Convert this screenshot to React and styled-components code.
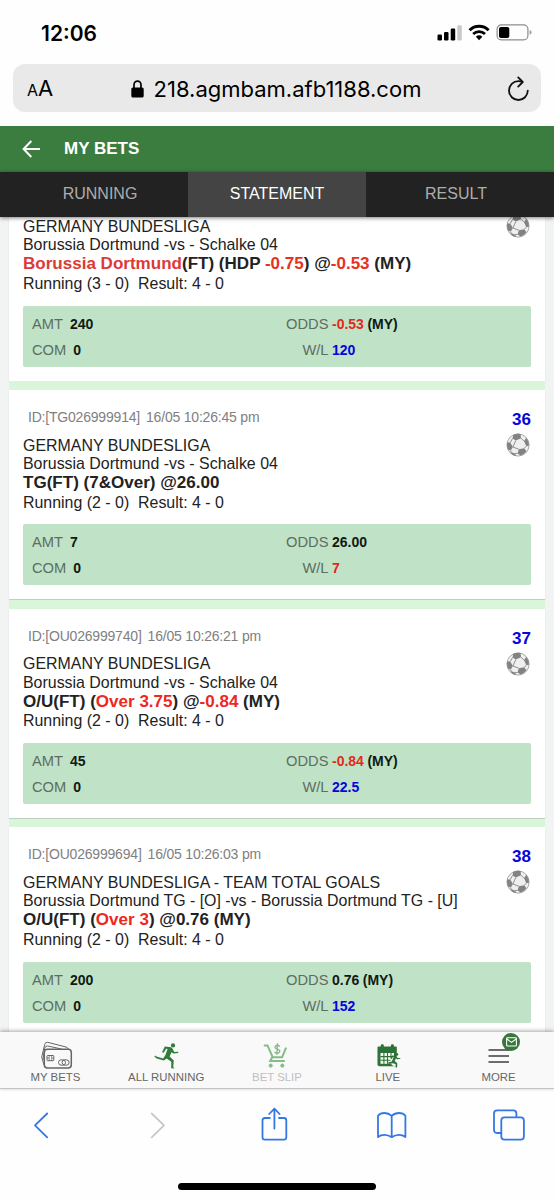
import React from 'react';
import styled, { createGlobalStyle } from 'styled-components';

const tabs = ['RUNNING', 'STATEMENT', 'RESULT'];

const bets = [
  {
    league: 'GERMANY BUNDESLIGA',
    match: 'Borussia Dortmund -vs - Schalke 04',
    pick: [['Borussia Dortmund', '#dc3a37'], ['(FT) (HDP '], ['-0.75', '#e8301e'], [') @'], ['-0.53', '#e8301e'], [' (MY)']],
    running: '3 - 0',
    amt: '240',
    odds: '-0.53',
    oddsType: '(MY)',
    wl: '120',
    win: true,
  },
  {
    no: 36,
    id: 'TG026999914',
    date: '16/05 10:26:45 pm',
    league: 'GERMANY BUNDESLIGA',
    match: 'Borussia Dortmund -vs - Schalke 04',
    pick: [['TG(FT) (7&Over) @26.00']],
    running: '2 - 0',
    amt: '7',
    odds: '26.00',
    wl: '7',
    win: false,
  },
  {
    no: 37,
    id: 'OU026999740',
    date: '16/05 10:26:21 pm',
    league: 'GERMANY BUNDESLIGA',
    match: 'Borussia Dortmund -vs - Schalke 04',
    pick: [['O/U(FT) ('], ['Over 3.75', '#ec291c'], [') @'], ['-0.84', '#ec291c'], [' (MY)']],
    running: '2 - 0',
    amt: '45',
    odds: '-0.84',
    oddsType: '(MY)',
    wl: '22.5',
    win: true,
  },
  {
    no: 38,
    id: 'OU026999694',
    date: '16/05 10:26:03 pm',
    league: 'GERMANY BUNDESLIGA - TEAM TOTAL GOALS',
    match: 'Borussia Dortmund TG - [O] -vs - Borussia Dortmund TG - [U]',
    pick: [['O/U(FT) ('], ['Over 3', '#ec291c'], [') @0.76 (MY)']],
    running: '2 - 0',
    amt: '200',
    odds: '0.76',
    oddsType: '(MY)',
    wl: '152',
    win: true,
  },
];

const App = () => (
  <Screen>
    <GlobalStyle />
    <StatusBar>
      <Clock>12:06</Clock>
      <StatusIcons />
    </StatusBar>

    <AddressBar>
      <TextSize>
        <small>A</small>A
      </TextSize>
      <Url>
        <LockIcon />
        <span>218.agmbam.afb1188.com</span>
      </Url>
      <ReloadIcon />
    </AddressBar>

    <Header>
      <BackArrow />
      <Title>MY BETS</Title>
    </Header>

    <Tabs>
      {tabs.map((tab) => (
        <Tab key={tab} $active={tab === 'STATEMENT'}>
          {tab}
        </Tab>
      ))}
    </Tabs>

    <Statement>
      <List>
        {bets.map((bet, i) => (
          <Bet key={i} bet={bet} />
        ))}
      </List>
    </Statement>

    <Nav>
      <NavItem>
        <CardsIcon />
        <span>MY BETS</span>
      </NavItem>
      <NavItem>
        <RunnerIcon />
        <span>ALL RUNNING</span>
      </NavItem>
      <NavItem $disabled>
        <CartIcon />
        <span>BET SLIP</span>
      </NavItem>
      <NavItem>
        <LiveIcon />
        <span>LIVE</span>
      </NavItem>
      <NavItem>
        <MenuIcon />
        <Badge>
          <MailIcon />
        </Badge>
        <span>MORE</span>
      </NavItem>
    </Nav>

    <BrowserBar>
      <BrowserIcons />
      <HomeIndicator />
    </BrowserBar>
  </Screen>
);

const Bet = ({ bet }) => (
  <Card>
    <Body>
      <Top>
        {bet.id && (
          <Ticket>
            <span>ID:[{bet.id}]</span>
            <span>{bet.date}</span>
          </Ticket>
        )}
        {bet.no && <Number>{bet.no}</Number>}
      </Top>
      <Info>
        <Lines>
          <Line>{bet.league}</Line>
          <Line>{bet.match}</Line>
          <Pick>
            {bet.pick.map(([text, color]) => (
              <Colored key={text} $color={color}>
                {text}
              </Colored>
            ))}
          </Pick>
          <Line>{`Running (${bet.running})  Result: 4 - 0`}</Line>
        </Lines>
        <BallIcon />
      </Info>
      <Summary>
        <Cell $gap={7}>
          AMT <Value>{bet.amt}</Value>
        </Cell>
        <Cell>
          <Label>ODDS</Label>
          <Value $color={bet.odds.startsWith('-') ? '#e02b1c' : undefined}>{bet.odds}</Value>
          {bet.oddsType && <Value>{bet.oddsType}</Value>}
        </Cell>
        <Cell $gap={7}>
          COM <Value>0</Value>
        </Cell>
        <Cell>
          <Label>W/L</Label>
          <Value $color={bet.win ? '#0505dc' : '#e8261c'}>{bet.wl}</Value>
        </Cell>
      </Summary>
    </Body>
  </Card>
);

const StatusIcons = () => (
  <svg width="96" height="18" viewBox="0 0 96 18">
    <rect x="0.5" y="10.5" width="4.5" height="6" rx="1.2" />
    <rect x="7" y="8" width="4.5" height="8.5" rx="1.2" />
    <rect x="13.7" y="4.5" width="4.5" height="12" rx="1.2" />
    <rect x="20.3" y="1.3" width="4.5" height="15.2" rx="1.2" fill="#c9c9c9" />
    <g fill="none" stroke="#000" strokeWidth="3">
      <path d="M32.6 6.2 A13.6 13.6 0 0 1 51.6 6.2" />
      <path d="M36.2 10 A8.3 8.3 0 0 1 48 10" strokeWidth="2.7" />
    </g>
    <path d="M38.8 12.7 A5 5 0 0 1 45.4 12.7 L42.1 16.2 Z" />
    <rect x="60.1" y="0.9" width="30.8" height="15" rx="4.2" fill="none" stroke="#8d8d8d" strokeWidth="1.2" />
    <rect x="62" y="2.9" width="10.3" height="11" rx="2" />
    <path d="M92.6 6 Q94.6 7 94.6 8.4 Q94.6 9.8 92.6 10.8 Z" fill="#9a9a9a" />
  </svg>
);

const LockIcon = () => (
  <svg width="13" height="18" viewBox="0 0 13 18">
    <rect x="0.3" y="7.5" width="12.4" height="10" rx="1.6" />
    <path d="M3 8.5 V4.8 A3.5 3.7 0 0 1 10 4.8 V8.5" fill="none" stroke="#000" strokeWidth="1.7" />
  </svg>
);

const ReloadIcon = () => (
  <svg width="22" height="26" viewBox="0 0 22 26" fill="none" stroke="#111" strokeWidth="1.8" strokeLinecap="round" strokeLinejoin="round">
    <path d="M15 6 C13.8 5.4 12.6 5.2 11.4 5.2 A9.4 9.4 0 1 0 20.8 14.6" />
    <path d="M11.2 1.4 L15.8 6 L11.2 10.6" />
  </svg>
);

const BackArrow = () => (
  <svg width="19" height="18" viewBox="0 0 19 18" fill="none" stroke="#fff" strokeWidth="2">
    <path d="M18 9 H2 M9.3 1 L1.6 9 L9.3 17" />
  </svg>
);

const BallIcon = () => (
  <svg width="24" height="24" viewBox="0 0 24 24">
    <circle cx="12" cy="12" r="11.1" fill="#efefef" stroke="#aaa" strokeWidth="1" />
    <g fill="#828282">
      <path d="M7.2 1.9 Q11.2 0.2 14.6 1.1 L15 5.2 L9.8 7.6 L6.6 5.4 Z" />
      <path d="M20.2 4.8 Q23.2 8.4 22.9 12.8 L20.4 13.2 L18 8.2 Z" />
      <path d="M1.2 9.4 L4.2 9.6 L6.9 14 L4.8 17.6 L2 16.6 Q0.6 12.8 1.2 9.4 Z" />
      <path d="M12.8 16.2 L18.2 15.2 L20.4 18.3 Q17.8 21.8 14.6 22.6 L11.6 20.4 Z" />
      <path d="M5 19 L8.8 20.6 L10.4 22.9 Q7 22.4 5 20.4 Z" />
    </g>
    <path
      d="M9.8 7.6 L6.9 14 M15 5.2 L18 8.2 M20.4 13.2 L18.2 15.2 M12.8 16.2 L6.9 14 M6.6 5.4 L4.2 9.6 M4.8 17.6 L5 19 M11.6 20.4 L8.8 20.6"
      fill="none"
      stroke="#909090"
      strokeWidth="1"
    />
  </svg>
);

const CardsIcon = () => (
  <svg width="34" height="30" viewBox="-1.5 0 34 30" overflow="visible" fill="none" stroke="#666" strokeWidth="1">
    <path d="M4.5 25 L2.2 17 L5.3 4.2 Q6 1.8 8.2 2.3 L26.5 7 Q28.3 7.5 28.8 9" />
    <path d="M3.4 20 L5.2 8.2 Q5.9 5.6 8.2 6 L22 9" />
    <rect x="4.8" y="9.2" width="27" height="18.8" rx="3.2" fill="#f9f9f9" strokeWidth="1.5" />
    <rect x="7.5" y="15.5" width="6.8" height="5.2" rx="0.8" />
    <path d="M7.5 18 H9.5 M12.3 18 H14.3 M9.7 15.5 V20.7 M12.2 15.5 V20.7" strokeWidth="0.7" />
    <rect x="19" y="19.8" width="7" height="5.4" rx="2.7" />
    <rect x="22.6" y="19.8" width="7" height="5.4" rx="2.7" />
  </svg>
);

const RunnerIcon = () => (
  <svg width="26" height="30" viewBox="-1 0 26 30" overflow="visible" fill="#2f7d3a">
    <circle cx="19" cy="5.4" r="2.1" />
    <path d="M17.2 7.2 L10.8 6.4 L8 12.2 L9.7 12.8 L12.1 8.7 L13.6 9 L11.2 15.6 L9.1 18.4 L2.4 16.6 L1.2 15.6 L0.4 16.4 L2.6 18.6 L9.9 20.4 L12.6 18.6 L17.3 21.7 L17.2 28.3 L20.6 28.6 L19.2 27 L19.8 20.6 L15.6 16.6 L17.5 12.2 L19.6 13.6 L24.4 13 L24.1 11.8 L20.2 11.9 L18.6 8.7 Z" />
  </svg>
);

const CartIcon = () => (
  <svg width="28" height="30" viewBox="1.7 0 28 30" overflow="visible" fill="none" stroke="#86bc88" strokeWidth="2">
    <path d="M2.5 5.4 H6.2 L11.4 17.2 H20.8 L24.8 7.6" />
    <path d="M11 17 L8.9 21 H23.5" />
    <circle cx="9.4" cy="25.6" r="1.6" fill="#86bc88" strokeWidth="1" />
    <circle cx="21" cy="25.6" r="1.6" fill="#86bc88" strokeWidth="1" />
    <path d="M18.6 6.6 Q16 4.3 14.1 6.1 Q12.8 8.3 16 9.1 Q19.6 10.1 18 12.4 Q16 14.2 13.2 12.1 M16.2 3.2 L15.6 14.8" strokeWidth="1.4" />
  </svg>
);

const LiveIcon = () => (
  <svg width="26" height="30" viewBox="-0.5 0 26 30" overflow="visible" fill="#2e7336">
    <path d="M2 7.5 Q2 6.5 3 6.5 H20.3 Q21.3 6.5 21.3 7.5 V26.2 H4 Q2 26.2 2 24.2 Z" />
    <rect x="5.3" y="4.2" width="3" height="5" rx="1.3" />
    <rect x="15.4" y="4.2" width="3" height="5" rx="1.3" />
    <g fill="#f9f9f9">
      <path d="M5 13 H18.5 V23.8 H5 Z" />
      <circle cx="20" cy="21.4" r="5" />
    </g>
    <path d="M5 16.6 H17 M5 20.2 H15 M8.4 13 V23.8 M12 13 V23.8 M15.5 13 V18" stroke="#2e7336" strokeWidth="1.1" />
    <circle cx="21.3" cy="14.4" r="1.4" />
    <path d="M20.4 15.7 L16.7 15.4 L15 18.8 L16.2 19 L17.4 16.9 L18.2 17 L16.3 21.5 L12.6 22.6 L13 24 L17.4 23.2 L20 24 L20.2 27.4 L21.6 27.5 L21.8 23.2 L19.2 21 L20.3 18.6 L22 19.3 L24.9 18.8 L24.8 17.9 L22.2 17.9 Z" />
  </svg>
);

const MenuIcon = () => (
  <svg width="22" height="30" viewBox="0.5 0 22 30" stroke="#6c6c6c" strokeWidth="2">
    <path d="M1 10 H21.5 M1 16 H21.5 M1 22 H21.5" />
  </svg>
);

const MailIcon = () => (
  <svg width="11" height="10" viewBox="0 0 11 10" fill="none" stroke="#fff" strokeWidth="1.1">
    <rect x="0.6" y="0.8" width="9.8" height="8.2" rx="0.8" />
    <path d="M0.9 2 L5.5 5.4 L10.1 2" />
  </svg>
);

const BrowserIcons = () => (
  <Toolbar>
    <svg viewBox="-9 0 34 36">
      <path d="M14.2 6.5 L2 18.4 L14.2 30.3" />
    </svg>
    <svg viewBox="-9 0 34 36">
      <path d="M1.7 6.5 L14 18.4 L1.7 30.3" stroke="#c8c8ca" />
    </svg>
    <svg viewBox="-3.5 0 34 36">
      <path d="M8.3 11 H3.4 Q1 11 1 13.4 V30.3 Q1 32.7 3.4 32.7 H22.4 Q24.8 32.7 24.8 30.3 V13.4 Q24.8 11 22.4 11 H17.5" />
      <path d="M12.9 21.5 V2 M7.7 7 L12.9 1.6 L18.1 7" />
    </svg>
    <svg viewBox="-1.2 0 34 36">
      <path d="M15.5 8.8 Q12.5 6 8.2 6 Q4 6 1.8 8.8 V30 Q4.4 27.8 8.2 27.8 Q12.3 27.8 15.5 30.2 Q18.7 27.8 22.8 27.8 Q26.6 27.8 29.2 30 V8.8 Q27 6 22.8 6 Q18.5 6 15.5 8.8 Z M15.5 8.8 V30" />
    </svg>
    <svg viewBox="-0.8 0 34 36">
      <path d="M8.5 26 H4.4 Q1.2 26 1.2 22.8 V6.6 Q1.2 3.4 4.4 3.4 H20.4 Q23.6 3.4 23.6 6.6 V10" />
      <rect x="8.5" y="10.3" width="22.6" height="22.4" rx="3.2" />
    </svg>
  </Toolbar>
);

const GlobalStyle = createGlobalStyle`
  body {
    margin: 0;
    background: #fefefe;
    font-family: 'Liberation Sans', Arial, sans-serif;
  }
  svg {
    display: block;
    flex: none;
  }
`;

const Screen = styled.div`
  width: 554px;
  height: 1200px;
  display: flex;
  flex-direction: column;
  overflow: hidden;
`;

const StatusBar = styled.div`
  height: 64px;
  padding: 2px 21px 0 41px;
  box-sizing: border-box;
  display: flex;
  align-items: center;
  justify-content: space-between;
`;

const Clock = styled.span`
  font-family: Inter, sans-serif;
  font-size: 21px;
  font-weight: 600;
`;

const AddressBar = styled.div`
  height: 48px;
  margin: 0 13px 14px;
  padding: 1px 12px 0 14px;
  box-sizing: border-box;
  display: flex;
  align-items: center;
  justify-content: space-between;
  background: #e9e9ea;
  border-radius: 12px;
  font-family: Inter, sans-serif;
`;

const TextSize = styled.span`
  width: 18px;
  font-size: 22px;
  line-height: 30px;
  white-space: nowrap;
  small {
    font-size: 16px;
  }
`;

const Url = styled.div`
  display: flex;
  align-items: center;
  gap: 10px;
  font-size: 22px;
`;

const Header = styled.header`
  height: 46px;
  flex: none;
  padding: 0 22px;
  display: flex;
  align-items: center;
  gap: 23px;
  background: #3a7d3e;
`;

const Title = styled.h1`
  margin: 0;
  color: #fff;
  font-size: 17px;
  font-weight: 700;
`;

const Tabs = styled.nav`
  position: relative;
  z-index: 1;
  height: 45px;
  flex: none;
  display: grid;
  grid-template-columns: 188px 178px 188px;
  box-shadow: 0 1px 4px rgba(0, 0, 0, 0.5);
`;

const Tab = styled.div`
  display: flex;
  align-items: center;
  justify-content: center;
  padding-bottom: 1px;
  background: ${({ $active }) => ($active ? '#444' : '#222')};
  color: ${({ $active }) => ($active ? '#fff' : '#adadad')};
  font-size: 16px;
  &:first-child {
    padding-left: 12px;
  }
  &:last-child {
    padding-right: 8px;
  }
`;

const Statement = styled.main`
  height: 815px;
  flex: none;
  overflow: hidden;
  background: #f2f4f4;
`;

/* scrolled so that the first ticket is partly under the tabs */
const List = styled.div`
  margin-top: -54.3px;
  padding: 0 9px;
`;

const Card = styled.article`
  height: 218.67px;
  padding-top: 8.6px;
  box-sizing: border-box;
  background: #daf6da;
`;

const Body = styled.div`
  height: 209.4px;
  padding: 18px 14px 0;
  box-sizing: border-box;
  background: #fff;
  box-shadow: 0 1px 1px rgba(0, 0, 0, 0.14);
`;

const Top = styled.div`
  height: 25px;
  display: flex;
  justify-content: space-between;
`;

const Ticket = styled.div`
  padding-left: 5px;
  display: flex;
  gap: 6px;
  color: #808080;
  font-size: 14px;
  line-height: 19px;
  letter-spacing: -0.2px;
`;

const Number = styled.b`
  color: #0505dc;
  font-size: 17px;
  line-height: 24px;
`;

const Info = styled.div`
  height: 91.5px;
  display: flex;
  justify-content: space-between;
  padding-right: 1.5px;
`;

const Lines = styled.div`
  padding-top: 3.6px;
`;

const Line = styled.div`
  color: #222;
  font-size: 15.93px;
  line-height: 18.5px;
  white-space: pre;
`;

const Pick = styled.div`
  margin: 0.6px 0 1.2px;
  color: #222;
  font-size: 17.05px;
  font-weight: 700;
  line-height: 18.5px;
  white-space: pre;
`;

const Colored = styled.span`
  color: ${({ $color }) => $color || 'inherit'};
`;

const Summary = styled.div`
  height: 61px;
  padding: 5px 9px 4px;
  box-sizing: border-box;
  display: grid;
  grid-template-columns: 253px 1fr;
  grid-template-rows: 26px 26px;
  background: #c0e2c7;
  border-radius: 2px;
`;

const Cell = styled.div`
  display: flex;
  align-items: center;
  gap: ${({ $gap }) => $gap || 3.5}px;
  color: #5c6e60;
  font-size: 14.7px;
`;

const Label = styled.span`
  width: 43.5px;
  text-align: right;
`;

const Value = styled.b`
  color: ${({ $color }) => $color || '#101a12'};
  font-size: 14px;
`;

const Nav = styled.nav`
  position: relative;
  z-index: 1;
  height: 57px;
  flex: none;
  box-sizing: border-box;
  display: grid;
  grid-template-columns: repeat(5, 1fr);
  background: #f9f9f9;
  border-bottom: 1px solid #c4c4c4;
  box-shadow: 0 -1px 4px rgba(0, 0, 0, 0.35);
`;

const NavItem = styled.div`
  position: relative;
  padding-top: 8px;
  display: flex;
  flex-direction: column;
  align-items: center;
  color: ${({ $disabled }) => ($disabled ? '#bfbfbf' : '#666')};
  font-size: 11.4px;
  line-height: 14px;
`;

const Badge = styled.div`
  position: absolute;
  top: 1px;
  left: 59px;
  width: 18px;
  height: 18px;
  display: flex;
  align-items: center;
  justify-content: center;
  background: #38763c;
  border-radius: 50%;
`;

const BrowserBar = styled.footer`
  flex: 1;
  display: flex;
  flex-direction: column;
  align-items: center;
  background: #fefefe;
`;

const Toolbar = styled.div`
  width: 100%;
  height: 94px;
  padding: 18px 28px 0 24px;
  box-sizing: border-box;
  display: flex;
  justify-content: space-between;
  svg {
    width: 34px;
    height: 36px;
    fill: none;
    stroke: #3478e5;
    stroke-width: 1.8;
    stroke-linecap: round;
    stroke-linejoin: round;
  }
`;

const HomeIndicator = styled.div`
  width: 198px;
  height: 7px;
  background: #000;
  border-radius: 4px;
`;

export default App;
